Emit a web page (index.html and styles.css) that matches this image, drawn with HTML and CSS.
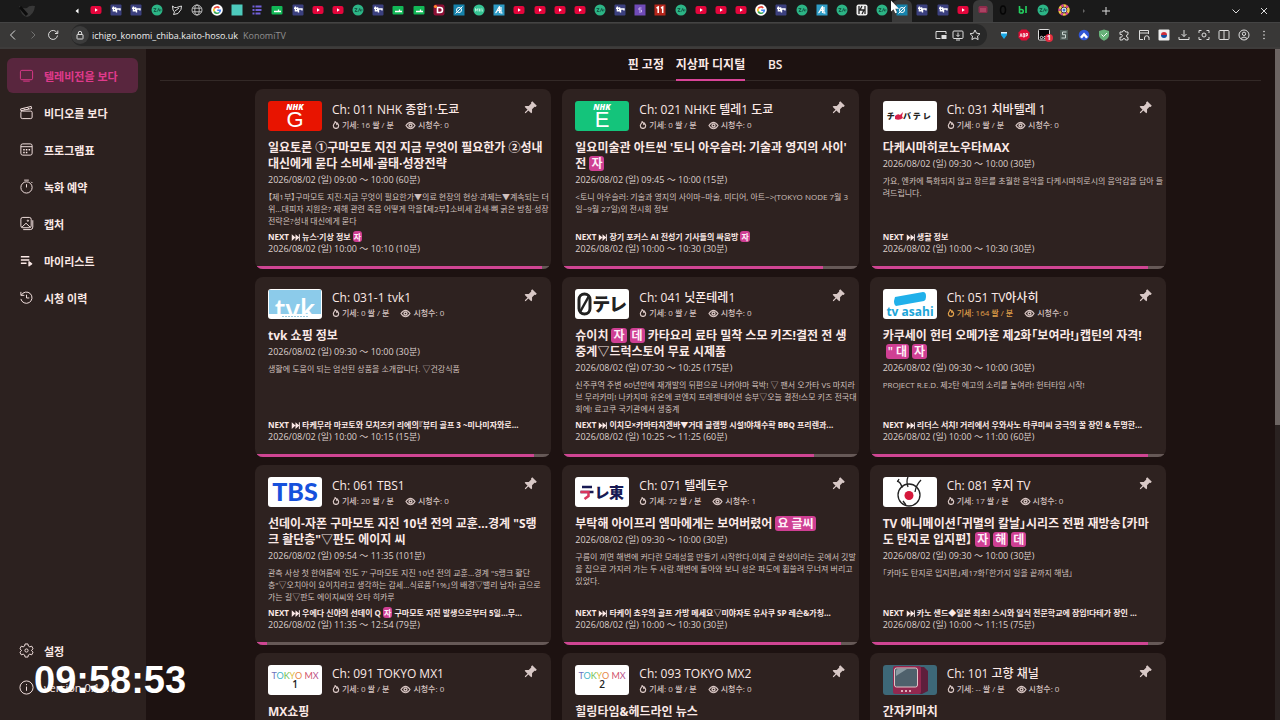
FILE: index.html
```html
<!DOCTYPE html>
<html lang="ko">
<head>
<meta charset="utf-8">
<title>KonomiTV</title>
<link rel="stylesheet" href="styles.css">
</head>
<body>
<svg class="defs" aria-hidden="true">
  <symbol id="yt" viewBox="0 0 12 12"><rect x="0.5" y="2" width="11" height="8" rx="2" fill="#e4063c"/><path d="M5 4.3v3.4L7.8 6z" fill="#fff"/></symbol>
  <symbol id="nv" viewBox="0 0 12 12"><rect x="0.5" y="0.5" width="11" height="11" rx="1" fill="#3b407f"/><path d="M2 4.2h4M3.4 2.5v4.3h2.2V3.2M6.5 8.5V5h3.5v1.5" stroke="#fff" stroke-width="1.4" fill="none"/></symbol>
  <symbol id="gr" viewBox="0 0 12 12"><circle cx="6" cy="6" r="5.5" fill="#2cb586"/><path d="M2.5 4.5h2.500l-2 3h2.500M6.500 7.500l1.200-3 1.200 3M9 6h1.500" stroke="#155c49" stroke-width="1" fill="none"/></symbol>
  <symbol id="gs" viewBox="0 0 12 12"><rect x="0.5" y="2" width="11" height="8.5" rx="1" fill="#12b857"/><path d="M3 7.5h7M7.5 5.5v2" stroke="#fff" stroke-width="1.3"/></symbol>
  <symbol id="bird" viewBox="0 0 12 12"><path d="M1.5 2l2 1.5h2L10.5 2 10 5.5 7 9.5l-4.500 1L3.500 8 2 6zM4 7l4-3" stroke="#ddd" fill="none"/></symbol>
  <symbol id="globe" viewBox="0 0 12 12"><g stroke="#ccc" fill="none" stroke-width="0.9"><circle cx="6" cy="6" r="5"/><ellipse cx="6" cy="6" rx="2.200" ry="5"/><path d="M1.500 4.200h9M1.500 7.800h9"/></g></symbol>
  <symbol id="gg" viewBox="0 0 12 12"><circle cx="6" cy="6" r="5.800" fill="#fff"/><g fill="none" stroke-width="1.600"><path d="M8.300 3.800A3.300 3.300 0 0 0 3.200 4.500" stroke="#ea4335"/><path d="M3.200 4.500a3.300 3.300 0 0 0 0 3" stroke="#fbbc05"/><path d="M3.200 7.500a3.300 3.300 0 0 0 5 1" stroke="#34a853"/><path d="M8.200 8.500A3.300 3.300 0 0 0 9.300 6.200H6.200" stroke="#4285f4"/></g></symbol>
  <symbol id="teal" viewBox="0 0 12 12"><rect x="0.500" y="0.500" width="11" height="11" fill="#4dcbbd"/></symbol>
  <symbol id="list" viewBox="0 0 12 12"><path d="M1.500 2.500h2m1 0h6M1.500 6h2m1 0h6M1.500 9.500h2m1 0h5" stroke="#7160d8" stroke-width="2"/></symbol>
  <symbol id="dd" viewBox="0 0 12 12"><rect x="0.500" y="0.500" width="11" height="11" rx="2" fill="#8d0f35"/><path d="M4.500 3.500h2.500a2.500 2.500 0 0 1 0 5H4.500z" fill="none" stroke="#fff" stroke-width="1.600"/><circle cx="2.500" cy="2.500" r="1.600" fill="#ff8b2a"/></symbol>
  <symbol id="pl" viewBox="0 0 12 12"><rect x="0.500" y="0.500" width="11" height="11" fill="#1683ac"/><ellipse cx="6" cy="6" rx="2.500" ry="2.500" fill="none" stroke="#fff"/><path d="M2.500 9.500L9.500 2.500" stroke="#fff"/></symbol>
  <symbol id="mk" viewBox="0 0 12 12"><circle cx="6" cy="6" r="5.600" fill="#35c393"/><path d="M2.500 7.500v-3l1.200 2 1.200-2v3M6.500 4.500v3m1.500-3L6.500 6 8 7.500M9 4.500v2.500h1" stroke="#d8fff0" stroke-width="0.700" fill="none"/></symbol>
  <symbol id="aa" viewBox="0 0 12 12"><rect x="0.500" y="0.500" width="11" height="11" fill="#2e9cc6"/><path d="M2.500 9C4 8 6 2.500 6.500 2.500V9M4 6.500h4M8 3v6h1.500" stroke="#fff" stroke-width="1.200" fill="none"/></symbol>
  <symbol id="ss" viewBox="0 0 12 12"><rect x="0.500" y="0.500" width="11" height="11" fill="#704bb8"/><path d="M7.500 4H5v2h2.500v2H5" stroke="#c9b5f0" fill="none"/></symbol>
  <symbol id="el" viewBox="0 0 12 12"><rect x="0.500" y="0.500" width="11" height="11" fill="#b5261b"/><path d="M2.500 4L4.200 3v6M7 4l1.700-1v6" stroke="#fff" stroke-width="1.500" fill="none"/></symbol>
  <symbol id="hh" viewBox="0 0 12 12"><rect x="0.500" y="0.500" width="11" height="11" rx="2" fill="#eee"/><path d="M3 2v8M6 2L4 6h4L6 10M9 2v8" stroke="#222" stroke-width="1.300" fill="none"/></symbol>
  <symbol id="tv" viewBox="0 0 12 12"><rect x="1.500" y="2" width="9" height="7" rx="1.500" fill="#8f2c4c"/><path d="M3 5h6M3 7h6" stroke="#d36687" stroke-width="0.800"/></symbol>
  <symbol id="dk" viewBox="0 0 12 12"><ellipse cx="6" cy="6" rx="2.500" ry="4" stroke="#050505" stroke-width="1.500" fill="none"/></symbol>
  <symbol id="bl" viewBox="0 0 12 12"><path d="M2.500 2v7M2.500 5.500h2A1.700 1.700 0 0 1 4.500 9H2.500M9 2v7" stroke="#23d160" stroke-width="1.600" fill="none"/></symbol>
  <symbol id="co" viewBox="0 0 12 12"><circle cx="6" cy="6" r="4.500" fill="none" stroke="#f4c542" stroke-width="2.500" stroke-dasharray="3 2"/><circle cx="6" cy="6" r="4.500" fill="none" stroke="#e0479b" stroke-width="2.500" stroke-dasharray="2 3" stroke-dashoffset="2"/><circle cx="6" cy="6" r="2.500" fill="#eee"/><circle cx="6" cy="6" r="1.500" fill="#3a79d8"/></symbol>

  <symbol id="pin" viewBox="0 0 24 24"><path fill="currentColor" transform="rotate(45 12 12)" d="M6.500 1h11v3l-1.500 1V11l4 4v2h-7v6L12 24.500 11 23v-6H4v-2l4-4V5L6.500 4z"/></symbol>
  <symbol id="fire" viewBox="0 0 12 12"><path d="M4.800 1C5 3 2 4.200 2 7.200a4 4 0 0 0 8 0C10 5.600 9 4.400 8.300 3.600 8.200 4.500 7.800 5 7.200 5.200 7.300 3.200 6.200 1.700 4.800 1z" fill="none" stroke="currentColor" stroke-width="1.800"/></symbol>
  <symbol id="eye" viewBox="0 0 14 12"><path d="M1 6c2-3.300 4-4.300 6-4.300S11 2.700 13 6c-2 3.300-4 4.300-6 4.300S3 9.300 1 6z" fill="none" stroke="currentColor" stroke-width="1.600"/><circle cx="7" cy="6" r="2" fill="none" stroke="currentColor" stroke-width="1.800"/></symbol>
  <symbol id="ff" viewBox="0 0 12 12"><path d="M1 1.500L6 6l-5 4.500zM6 1.500L11 6l-5 4.500zM10.500 1.500h1.300v9h-1.300z" fill="currentColor"/></symbol>
</svg>

<header class="browser">
  <div class="tabstrip">
    <div class="strip-start"><svg class="swallow" viewBox="0 0 20 16"><path d="M2 3q4 3 8 2 2-3 8-2-1 9-8 11Q4 13 2 3z" fill="#383838"/><path d="M3 4l7 8" stroke="#0c0c0c" stroke-width="3"/></svg><svg class="fav" viewBox="0 0 12 12"><path d="M7.500 3.500v5L4.500 6z" fill="#fff"/></svg></div>
    <nav class="tablist" aria-label="탭">
      <button><svg class="fav"><use href="#yt"/></svg></button><button><svg class="fav"><use href="#nv"/></svg></button><button><svg class="fav"><use href="#nv"/></svg></button><button><svg class="fav"><use href="#gr"/></svg></button><button><svg class="fav"><use href="#bird"/></svg></button><button><svg class="fav"><use href="#globe"/></svg></button><button><svg class="fav"><use href="#gg"/></svg></button><button><svg class="fav"><use href="#teal"/></svg></button><button><svg class="fav"><use href="#list"/></svg></button><button><svg class="fav"><use href="#gs"/></svg></button>
      <button><svg class="fav"><use href="#nv"/></svg></button><button><svg class="fav"><use href="#yt"/></svg></button><button><svg class="fav"><use href="#yt"/></svg></button><button><svg class="fav"><use href="#gr"/></svg></button><button><svg class="fav"><use href="#nv"/></svg></button><button><svg class="fav"><use href="#gs"/></svg></button><button><svg class="fav"><use href="#gs"/></svg></button><button><svg class="fav"><use href="#dd"/></svg></button><button><svg class="fav"><use href="#pl"/></svg></button><button><svg class="fav"><use href="#mk"/></svg></button>
      <button><svg class="fav"><use href="#aa"/></svg></button><button><svg class="fav"><use href="#yt"/></svg></button><button><svg class="fav"><use href="#yt"/></svg></button><button><svg class="fav"><use href="#yt"/></svg></button><button><svg class="fav"><use href="#yt"/></svg></button><button><svg class="fav"><use href="#gr"/></svg></button><button><svg class="fav"><use href="#nv"/></svg></button><button><svg class="fav"><use href="#ss"/></svg></button><button><svg class="fav"><use href="#el"/></svg></button><button><svg class="fav"><use href="#gr"/></svg></button>
      <button><svg class="fav"><use href="#yt"/></svg></button><button><svg class="fav"><use href="#yt"/></svg></button><button><svg class="fav"><use href="#yt"/></svg></button><button><svg class="fav"><use href="#gg"/></svg></button><button><svg class="fav"><use href="#nv"/></svg></button><button><svg class="fav"><use href="#gr"/></svg></button><button><svg class="fav"><use href="#aa"/></svg></button><button><svg class="fav"><use href="#gr"/></svg></button><button><svg class="fav"><use href="#hh"/></svg></button><button><svg class="fav"><use href="#gr"/></svg></button>
      <button class="on"><svg class="fav"><use href="#pl"/></svg></button><button><svg class="fav"><use href="#nv"/></svg></button><button><svg class="fav"><use href="#nv"/></svg></button><button><svg class="fav"><use href="#yt"/></svg></button><button class="on"><svg class="fav"><use href="#tv"/></svg></button><button><svg class="fav"><use href="#dk"/></svg></button><button><svg class="fav"><use href="#bl"/></svg></button><button><svg class="fav"><use href="#gr"/></svg></button><button><svg class="fav"><use href="#co"/></svg></button>
    </nav>
    <div class="strip-end">
      <svg class="fav" viewBox="0 0 12 12"><path d="M5 4v4l2-2z" fill="#666"/></svg>
      <button class="new" aria-label="새 탭"><svg class="fav line" viewBox="0 0 12 12"><path d="M6 2v8M2 6h8"/></svg></button>
      <button aria-label="탭 검색"><svg class="fav line" viewBox="0 0 12 12"><path d="M2.500 4.500L6 8l3.500-3.500"/></svg></button>
      <button aria-label="닫기"><svg class="fav line" viewBox="0 0 12 12"><path d="M3 3l6 6M9 3L3 9"/></svg></button>
    </div>
  </div>
  <div class="toolbar">
    <button aria-label="뒤로"><svg class="fav line" viewBox="0 0 12 12"><path d="M8 1.500L3.500 6 8 10.500"/></svg></button>
    <button aria-label="앞으로" class="dim"><svg class="fav line" viewBox="0 0 12 12"><path d="M4.500 2.500L8 6l-3.500 3.500"/></svg></button>
    <button aria-label="새로고침"><svg class="fav line" viewBox="0 0 12 12"><path d="M10 3.800A4.500 4.500 0 1 0 10.500 6.500M10.800 1.500v3H8"/></svg></button>
    <div class="omnibox">
      <span class="lock"><svg class="fav line" viewBox="0 0 12 12"><rect x="3" y="5.500" width="6" height="4.500" rx="0.500"/><path d="M4.300 5.500V4a1.700 1.700 0 0 1 3.400 0v1.500"/></svg></span>
      <span class="url">ichigo_konomi_chiba.kaito-hoso.uk</span><span class="site">KonomiTV</span>
      <span class="omni-icons">
        <svg class="fav line" viewBox="0 0 12 12"><path d="M11 5V2.500H1v7h4.500"/><rect x="7" y="6.500" width="4" height="3" fill="#ddd"/></svg>
        <svg class="fav line" viewBox="0 0 12 12"><rect x="1" y="2" width="10" height="7.500" rx="1"/><path d="M6 3.500v4M4.300 5.800L6 7.500l1.700-1.700M4 11h4"/></svg>
        <svg class="fav line" viewBox="0 0 12 12"><path d="M6 1l1.500 3.200 3.500.5-2.500 2.400.6 3.500L6 8.900l-3.100 1.700.6-3.500L1 4.700l3.500-.5z"/></svg>
      </span>
    </div>
    <div class="extensions">
      <svg class="fav" viewBox="0 0 12 12"><path d="M3 3h6v3L6 10 3 6z" fill="#19a8e6"/><path d="M3 3h6v1.500H3z" fill="#e6f6ff"/></svg>
      <svg class="fav" viewBox="0 0 12 12"><path d="M3.500 0.500h5l3 3v5l-3 3h-5l-3-3v-5z" fill="#dd0d35"/><path d="M2 8l1-3.500L4 8M5.200 4.500V8H6.500V4.500zM8 8V4.500h1.500v2H8" stroke="#fff" stroke-width="0.800" fill="none"/></svg>
      <span class="ext-badge"><svg class="fav" viewBox="0 0 12 12"><rect x="0.500" y="0.500" width="11" height="10.500" rx="1" fill="#050505" stroke="#ddd"/><circle cx="3.500" cy="8.500" r="1.200" fill="none" stroke="#ddd"/><circle cx="7" cy="8.500" r="1.200" fill="none" stroke="#ddd"/></svg><b>1</b></span>
      <svg class="fav" viewBox="0 0 12 12"><rect x="2" y="1" width="8" height="10" fill="#4c5955"/><path d="M8.500 3h-4v2.700h3V9H3.500" fill="none" stroke="#ccd8d4"/></svg>
      <svg class="fav" viewBox="0 0 12 12"><circle cx="6" cy="6" r="5.300" fill="#3157d7"/><path d="M2 8l4-4.500L10 8 8 9.500 6 7 4 9.500z" fill="#fff"/></svg>
      <svg class="fav" viewBox="0 0 12 12"><path d="M6 0.500l5 1.500v4c0 3-2.500 4.500-5 5.700C3.500 10.500 1 9 1 6V2z" fill="#67b279"/><path d="M3.500 5.500l2 2 3.500-3.500" stroke="#fff" fill="none"/></svg>
      <svg class="fav line" viewBox="0 0 12 12"><path d="M2 3h2.500a1.500 1.500 0 0 1 3 0H10v2.500a1.500 1.500 0 1 0 0 3V11H7.500a1.500 1.500 0 0 0-3 0H2V8a1.500 1.500 0 1 0 0-2.500z"/></svg>
      <svg class="fav line" viewBox="0 0 12 12"><path d="M5 10.500H1.500v-9h9V5M1.500 4h9M6.500 9a2.200 2.200 0 0 1 4.500 0M6.500 8.500v2.500M11 8.500v2.500"/></svg>
      <svg class="fav" viewBox="0 0 12 12"><rect x="0.500" y="0.500" width="11" height="11" rx="1" fill="#eee"/><path d="M3 6a3 3 0 0 1 6 0z" fill="#cd2e3a"/><path d="M3 6a3 3 0 0 0 6 0z" fill="#1450a0"/></svg>
      <svg class="fav line" viewBox="0 0 12 12"><path d="M6 1v6.500M3.500 5L6 7.500 8.500 5M1 8v2.500h10V8"/></svg>
      <svg class="fav line" viewBox="0 0 12 12"><path d="M1 4V1.500h2.500M8.500 1.500H11V4M11 8v2.500H8.500M3.500 10.500H1V8"/><circle cx="6" cy="6" r="2"/></svg>
      <svg class="fav line" viewBox="0 0 12 12"><rect x="1" y="1.500" width="10" height="9" rx="1"/><path d="M6 1.500v9"/></svg>
      <svg class="fav line" viewBox="0 0 12 12"><circle cx="6" cy="6" r="5"/><circle cx="6" cy="4.800" r="1.700"/><path d="M2.800 9.500q3.200-3 6.400 0"/></svg>
      <svg class="fav" viewBox="0 0 12 12"><g fill="#ddd"><circle cx="6" cy="2.500" r="0.800"/><circle cx="6" cy="6" r="0.800"/><circle cx="6" cy="9.500" r="0.800"/></g></svg>
    </div>
  </div>
  <svg class="cursor" viewBox="0 0 10 14"><path d="M1 0.500v11l2.500-2.200 1.800 4 1.700-.8-1.700-3.800H9z" fill="#fff"/></svg>
</header>

<div class="app">
  <aside class="sidebar">
    <a class="nav active" href="#"><svg viewBox="0 0 16 16"><rect x="1.500" y="2.500" width="13" height="10" rx="1.500"/><path d="M4.500 14h7"/></svg>텔레비전을 보다</a>
    <a class="nav" href="#"><svg viewBox="0 0 16 16"><rect x="2" y="6.500" width="12" height="8" rx="1.500"/><path d="M2 6L1.700 4.200 13 1.500l.5 2.300zM5 3.500l1.500 1.700M9 2.500L10.500 4.300"/></svg>비디오를 보다</a>
    <a class="nav" href="#"><svg viewBox="0 0 16 16"><rect x="2" y="2" width="12" height="12" rx="2"/><path d="M2 5h12"/><path d="M4.500 11.200h1.600M7.300 11.200h1.600M7.300 8.200h1.600M10.200 8.200h1.600M4.500 8.200h1.600" stroke-width="1.700"/></svg>프로그램표</a>
    <a class="nav" href="#"><svg viewBox="0 0 16 16"><circle cx="8" cy="9" r="6"/><path d="M5.500 1.200h5M8 5.500V9M13 3l1.300 1.300"/></svg>녹화 예약</a>
    <a class="nav" href="#"><svg viewBox="0 0 16 16"><rect x="2" y="1.500" width="11" height="11" rx="2"/><path d="M4.500 14.500H12q2.700 0 2.700-2.700V4.500M3 12l4.500-4.300L12 12"/><circle cx="9.500" cy="5" r="0.700"/></svg>캡처</a>
    <a class="nav" href="#"><svg viewBox="0 0 16 16"><path d="M2 4h9M2 7.500h9M2 11h6" stroke-width="1.500"/><path d="M10.500 9v5l3.500-2.500z" fill="currentColor"/></svg>마이리스트</a>
    <a class="nav" href="#"><svg viewBox="0 0 16 16"><path d="M2.500 5.500A6 6 0 1 1 2 9.500M2 2v3.700h3.700M8 5v3.500h3"/></svg>시청 이력</a>
    <span class="spacer"></span>
    <a class="nav" href="#"><svg viewBox="0 0 16 16"><path d="M6.500 1h3l.5 2.200 1.500.9 2.100-.7L15 6.200l-1.600 1.500v.6L15 9.800l-1.400 2.800-2.100-.7-1.500.9-.5 2.200h-3L6 12.800l-1.500-.9-2.100.7L1 9.800l1.600-1.500v-.6L1 6.200l1.400-2.800 2.100.7L6 3.200z"/><circle cx="8" cy="8" r="1.700"/></svg>설정</a>
    <a class="nav version" href="#"><svg viewBox="0 0 16 16"><circle cx="8" cy="8" r="7"/><path d="M8 7v4.500M8 4.300v1.200"/></svg>version 0.14.1</a>
  </aside>

  <main class="content">
    <nav class="channels-tab">
      <button>핀 고정</button>
      <button class="current">지상파 디지털</button>
      <button>BS</button>
    </nav>
    <div class="grid">
      <article class="card">
        <div class="head"><svg class="logo" viewBox="0 0 54 30"><rect width="54" height="30" fill="#e81400"/><text x="27" y="9" class="nhk">NHK</text><text x="27" y="26" class="big">G</text></svg>
          <div class="info"><h2>Ch: 011 NHK 종합1·도쿄</h2><p class="stat"><span><svg><use href="#fire"/></svg>기세: 16 쌀 / 분</span><span><svg class="e"><use href="#eye"/></svg>시청수: 0</span></p></div>
          <button class="pin" aria-label="핀"><svg><use href="#pin"/></svg></button></div>
        <h3>일요토론 ①구마모토 지진 지금 무엇이 필요한가 ②성내<br>대신에게 묻다 소비세·골태·성장전략</h3>
        <p class="time">2026/08/02 (일) 09:00 〜 10:00 (60분)</p>
        <p class="desc">【제1부】구마모토 지진·지금 무엇이 필요한가▼의료 현장의 현상·과제는▼계속되는 더<br>위…대피자 지원은? 재해 관련 죽음 어떻게 막을【제2부】소비세 감세·뼈 굵은 방침·성장<br>전략은?성내 대신에게 묻다</p>
        <p class="next">NEXT <svg><use href="#ff"/></svg> 뉴스·기상 정보<mark>자</mark></p>
        <p class="next-time">2026/08/02 (일) 10:00 〜 10:10 (10분)</p>
        <div class="bar"><i style="width:97%"></i></div>
      </article>

      <article class="card">
        <div class="head"><svg class="logo" viewBox="0 0 54 30"><rect width="54" height="30" fill="#14c47b"/><text x="27" y="9" class="nhk">NHK</text><text x="27" y="26" class="big">E</text></svg>
          <div class="info"><h2>Ch: 021 NHKE 텔레1 도쿄</h2><p class="stat"><span><svg><use href="#fire"/></svg>기세: 0 쌀 / 분</span><span><svg class="e"><use href="#eye"/></svg>시청수: 0</span></p></div>
          <button class="pin" aria-label="핀"><svg><use href="#pin"/></svg></button></div>
        <h3>일요미술관 아트씬 '토니 아우슬러: 기술과 영지의 사이'<br>전<mark>자</mark></h3>
        <p class="time">2026/08/02 (일) 09:45 〜 10:00 (15분)</p>
        <p class="desc">&lt;토니 아우슬러: 기술과 영지의 사이마~마술, 미디어, 아트~&gt;(TOKYO NODE 7월 3<br>일~9월 27일)외 전시회 정보</p>
        <p class="next">NEXT <svg><use href="#ff"/></svg> 장기 포커스 AI 전성기 기사들의 싸움방<mark>자</mark></p>
        <p class="next-time">2026/08/02 (일) 10:00 〜 10:30 (30분)</p>
        <div class="bar"><i style="width:88%"></i></div>
      </article>

      <article class="card">
        <div class="head"><svg class="logo" viewBox="0 0 54 30"><rect width="54" height="30" fill="#fff"/><g class="jp" font-size="8" fill="#222"><text x="4" y="18">チ</text><text x="20" y="18">バ</text><text x="30" y="18">テ</text><text x="40" y="18">レ</text></g><path d="M12 15q3-3 5-1l3-3-1 4 1 2q-4 3-8 1z" fill="#d4204c"/></svg>
          <div class="info"><h2>Ch: 031 치바텔레 1</h2><p class="stat"><span><svg><use href="#fire"/></svg>기세: 0 쌀 / 분</span><span><svg class="e"><use href="#eye"/></svg>시청수: 0</span></p></div>
          <button class="pin" aria-label="핀"><svg><use href="#pin"/></svg></button></div>
        <h3>다케시마히로노우타MAX</h3>
        <p class="time">2026/08/02 (일) 09:30 〜 10:00 (30분)</p>
        <p class="desc">가요, 엔카에 특화되지 않고 장르를 초월한 음악을 다케시마히로시의 음악감을 담아 들<br>려드립니다.</p>
        <p class="next">NEXT <svg><use href="#ff"/></svg> 생활 정보</p>
        <p class="next-time">2026/08/02 (일) 10:00 〜 10:30 (30분)</p>
        <div class="bar"><i style="width:94%"></i></div>
      </article>

      <article class="card">
        <div class="head"><svg class="logo" viewBox="0 0 54 30"><rect width="54" height="30" fill="#fff"/><rect x="1" y="1" width="52" height="24" fill="#8ccbea"/><text x="27" y="30" class="tvk">tvk</text><rect x="1" y="25" width="52" height="4" fill="#fff"/><path d="M14 27.500h27" stroke="#9dc8dc" stroke-dasharray="2 1"/></svg>
          <div class="info"><h2>Ch: 031-1 tvk1</h2><p class="stat"><span><svg><use href="#fire"/></svg>기세: 0 쌀 / 분</span><span><svg class="e"><use href="#eye"/></svg>시청수: 0</span></p></div>
          <button class="pin" aria-label="핀"><svg><use href="#pin"/></svg></button></div>
        <h3>tvk 쇼핑 정보</h3>
        <p class="time">2026/08/02 (일) 09:30 〜 10:00 (30분)</p>
        <p class="desc">생활에 도움이 되는 엄선된 상품을 소개합니다. ▽건강식품</p>
        <p class="next">NEXT <svg><use href="#ff"/></svg> 타케무라 마코토와 모치즈키 리에의『뷰티 골프 3 ~미나미자와로...</p>
        <p class="next-time">2026/08/02 (일) 10:00 〜 10:15 (15분)</p>
        <div class="bar"><i style="width:94%"></i></div>
      </article>

      <article class="card">
        <div class="head"><svg class="logo" viewBox="0 0 54 30"><rect width="54" height="30" fill="#fff"/><rect x="4" y="5" width="11" height="20" rx="5.500" fill="none" stroke="#222" stroke-width="3"/><path d="M5 23L14 7" stroke="#222" stroke-width="2.500"/><text x="18" y="22" class="jp" font-size="18" fill="#222">テレ</text></svg>
          <div class="info"><h2>Ch: 041 닛폰테레1</h2><p class="stat"><span><svg><use href="#fire"/></svg>기세: 0 쌀 / 분</span><span><svg class="e"><use href="#eye"/></svg>시청수: 0</span></p></div>
          <button class="pin" aria-label="핀"><svg><use href="#pin"/></svg></button></div>
        <h3>슈이치<mark>자</mark><mark>데</mark> 카타요리 료타 밀착 스모 키즈!결전 전 생<br>중계▽드럭스토어 무료 시제품</h3>
        <p class="time">2026/08/02 (일) 07:30 〜 10:25 (175분)</p>
        <p class="desc">신주쿠역 주변 60년만에 재개발의 뒤편으로 나카야마 육박! ▽ 팬서 오가타 VS 마지라<br>브 무라카미! 나카지마 유온에 코엔지 프레젠테이션 승부▽오늘 결전!스모 키즈 전국대<br>회에! 료고쿠 국기관에서 생중계</p>
        <p class="next">NEXT <svg><use href="#ff"/></svg> 이치모×카마타치겐바▼거대 글램핑 시설!야채수확 BBQ 프리렌과...</p>
        <p class="next-time">2026/08/02 (일) 10:25 〜 11:25 (60분)</p>
        <div class="bar"><i style="width:85%"></i></div>
      </article>

      <article class="card">
        <div class="head"><svg class="logo" viewBox="0 0 54 30"><rect width="54" height="30" fill="#fff"/><path d="M12 8l28-5q3 0 3 4t-2 5l-28 5q-2-1-2-5z" fill="#20b0ea"/><text x="27" y="27" text-anchor="middle" font-size="12" font-weight="700" fill="#20a5d8">tv asahi</text></svg>
          <div class="info"><h2>Ch: 051 TV아사히</h2><p class="stat"><span class="hot"><svg><use href="#fire"/></svg>기세: 164 쌀 / 분</span><span><svg class="e"><use href="#eye"/></svg>시청수: 0</span></p></div>
          <button class="pin" aria-label="핀"><svg><use href="#pin"/></svg></button></div>
        <h3>카쿠세이 헌터 오메가혼 제2화「보여라!」캡틴의 자격!<br><mark>" 대</mark><mark>자</mark></h3>
        <p class="time">2026/08/02 (일) 09:30 〜 10:00 (30분)</p>
        <p class="desc">PROJECT R.E.D. 제2탄 에고의 소리를 높여라! 헌터타임 시작!</p>
        <p class="next">NEXT <svg><use href="#ff"/></svg> 리더스 서치! 거리에서 우와사노 타쿠미씨 궁극의 꿀 장인 &amp; 투명한...</p>
        <p class="next-time">2026/08/02 (일) 10:00 〜 11:00 (60분)</p>
        <div class="bar"><i style="width:94%"></i></div>
      </article>

      <article class="card">
        <div class="head"><svg class="logo" viewBox="0 0 54 30"><rect width="54" height="30" fill="#fff"/><text x="27" y="24" text-anchor="middle" class="tbs">TBS</text></svg>
          <div class="info"><h2>Ch: 061 TBS1</h2><p class="stat"><span><svg><use href="#fire"/></svg>기세: 20 쌀 / 분</span><span><svg class="e"><use href="#eye"/></svg>시청수: 0</span></p></div>
          <button class="pin" aria-label="핀"><svg><use href="#pin"/></svg></button></div>
        <h3>선데이-자폰 구마모토 지진 10년 전의 교훈…경계 "S랭<br>크 활단층"▽판도 에이지 씨</h3>
        <p class="time">2026/08/02 (일) 09:54 〜 11:35 (101분)</p>
        <p class="desc">관측 사상 첫 한여름에 '진도 7' 구마모토 지진 10년 전의 교훈…경계 "S랭크 활단<br>층"▽오치아이 요이치라고 생각하는 감세…식료품「1%」의 배경▽밸리 남자! 금으로<br>가는 길▽판도 에이지씨와 오타 히카루</p>
        <p class="next">NEXT <svg><use href="#ff"/></svg> 우에다 신야의 선데이 Q<mark>자</mark> 구마모토 지진 발생으로부터 5일…무...</p>
        <p class="next-time">2026/08/02 (일) 11:35 〜 12:54 (79분)</p>
        <div class="bar"><i style="width:4%"></i></div>
      </article>

      <article class="card">
        <div class="head"><svg class="logo" viewBox="0 0 54 30"><rect width="54" height="30" fill="#fff"/><path d="M7 10h10M5.500 15h13" stroke="#171a54" stroke-width="2.500"/><path d="M5.500 15h8v4l-4 3" fill="none" stroke="#d9365e" stroke-width="2.500"/><text x="20" y="21" class="jp" font-size="15" fill="#171a54">レ東</text></svg>
          <div class="info"><h2>Ch: 071 텔레토우</h2><p class="stat"><span><svg><use href="#fire"/></svg>기세: 72 쌀 / 분</span><span><svg class="e"><use href="#eye"/></svg>시청수: 1</span></p></div>
          <button class="pin" aria-label="핀"><svg><use href="#pin"/></svg></button></div>
        <h3>부탁해 아이프리 엠마에게는 보여버렸어<mark>요 글씨</mark></h3>
        <p class="time">2026/08/02 (일) 09:30 〜 10:00 (30분)</p>
        <p class="desc">구름이 끼면 해변에 커다란 모래성을 만들기 시작한다.이제 곧 완성이라는 곳에서 깃발<br>을 집으로 가지러 가는 두 사람.해변에 돌아와 보니 성은 파도에 휩쓸려 무너져 버리고<br>있었다.</p>
        <p class="next">NEXT <svg><use href="#ff"/></svg> 타케이 쵸우의 골프 가방 메세요▽미야자토 유사쿠 SP 레슨&amp;가칭...</p>
        <p class="next-time">2026/08/02 (일) 10:00 〜 10:30 (30분)</p>
        <div class="bar"><i style="width:94%"></i></div>
      </article>

      <article class="card">
        <div class="head"><svg class="logo" viewBox="0 0 54 30"><rect width="54" height="30" fill="#fff"/><g fill="none" stroke="#222" stroke-width="1.300"><circle cx="26" cy="18" r="11"/><path d="M14 4q4 1 5 7M25 0q-2 4 0 10M38 3q-5 5-6 12M15 4l1-2M20 24l3 4"/></g><circle cx="26" cy="18.500" r="4.500" fill="#d5173b"/></svg>
          <div class="info"><h2>Ch: 081 후지 TV</h2><p class="stat"><span><svg><use href="#fire"/></svg>기세: 17 쌀 / 분</span><span><svg class="e"><use href="#eye"/></svg>시청수: 0</span></p></div>
          <button class="pin" aria-label="핀"><svg><use href="#pin"/></svg></button></div>
        <h3>TV 애니메이션「귀멸의 칼날」시리즈 전편 재방송【카마<br>도 탄지로 입지편】<mark>자</mark><mark>해</mark><mark>데</mark></h3>
        <p class="time">2026/08/02 (일) 09:30 〜 10:00 (30분)</p>
        <p class="desc">「카마도 탄지로 입지편」제17화「한가지 일을 끝까지 해냄」</p>
        <p class="next">NEXT <svg><use href="#ff"/></svg> 카노 샌드◆일본 최초! 스시와 일식 전문학교에 잠입!다테가 장인 ...</p>
        <p class="next-time">2026/08/02 (일) 10:00 〜 11:15 (75분)</p>
        <div class="bar"><i style="width:94%"></i></div>
      </article>

      <article class="card">
        <div class="head"><svg class="logo" viewBox="0 0 54 30"><rect width="54" height="30" fill="#fff"/><text x="27" y="14" class="mx"><tspan fill="#6b72bd">T</tspan><tspan fill="#45b5c9">O</tspan><tspan fill="#71bf55">K</tspan><tspan fill="#dfbd3c">Y</tspan><tspan fill="#e8874a">O</tspan><tspan fill="#d1506b"> M</tspan><tspan fill="#b8528b">X</tspan></text><text x="27" y="23" class="num">1</text></svg>
          <div class="info"><h2>Ch: 091 TOKYO MX1</h2><p class="stat"><span><svg><use href="#fire"/></svg>기세: 0 쌀 / 분</span><span><svg class="e"><use href="#eye"/></svg>시청수: 0</span></p></div>
          <button class="pin" aria-label="핀"><svg><use href="#pin"/></svg></button></div>
        <h3>MX쇼핑</h3>
      </article>

      <article class="card">
        <div class="head"><svg class="logo" viewBox="0 0 54 30"><rect width="54" height="30" fill="#fff"/><text x="27" y="14" class="mx"><tspan fill="#6b72bd">T</tspan><tspan fill="#45b5c9">O</tspan><tspan fill="#71bf55">K</tspan><tspan fill="#dfbd3c">Y</tspan><tspan fill="#e8874a">O</tspan><tspan fill="#d1506b"> M</tspan><tspan fill="#b8528b">X</tspan></text><text x="27" y="23" class="num">2</text></svg>
          <div class="info"><h2>Ch: 093 TOKYO MX2</h2><p class="stat"><span><svg><use href="#fire"/></svg>기세: 0 쌀 / 분</span><span><svg class="e"><use href="#eye"/></svg>시청수: 0</span></p></div>
          <button class="pin" aria-label="핀"><svg><use href="#pin"/></svg></button></div>
        <h3>힐링타임&amp;헤드라인 뉴스</h3>
      </article>

      <article class="card">
        <div class="head"><svg class="logo" viewBox="0 0 54 30"><rect width="54" height="30" fill="#3d6878"/><path d="M34 2h7l4 4v20l-6 3h-6z" fill="#5e1f3c"/><rect x="10" y="1" width="28" height="28" rx="2" fill="#92284f"/><rect x="11.500" y="3" width="23" height="19" rx="2" fill="#4f616c" stroke="#e4c5c9"/><path d="M13 11v-5q0-2 2-2h9z" fill="#8b9ba3"/><path d="M18 26h2m2 0h2m2 0h2" stroke="#f5dce0" stroke-width="1.500"/></svg>
          <div class="info"><h2>Ch: 101 고향 채널</h2><p class="stat"><span><svg><use href="#fire"/></svg>기세: -- 쌀 / 분</span><span><svg class="e"><use href="#eye"/></svg>시청수: 0</span></p></div>
          <button class="pin" aria-label="핀"><svg><use href="#pin"/></svg></button></div>
        <h3>간자키마치</h3>
      </article>
    </div>
  </main>
  <div class="scroll"><i></i></div>
</div>
<time class="clock">09:58:53</time>
</body>
</html>
```
FILE: styles.css
```css
* { box-sizing: border-box; }
body {
  margin: 0;
  height: 100vh;
  display: flex;
  flex-direction: column;
  overflow: hidden;
  background: #1d1211;
  color: #fbe9e6;
  font-family: "Open Sans", "Noto Sans CJK KR", "Noto Sans CJK JP", sans-serif;
}
h2, h3, p { margin: 0; }
button {
  margin: 0;
  padding: 0;
  border: 0;
  background: none;
  color: inherit;
  font: inherit;
}
a { color: inherit; text-decoration: none; }
svg { display: block; flex: none; }
.defs { position: absolute; width: 0; height: 0; }

/* Browser chrome */
.browser { position: relative; flex: none; background: #1a1a1a; }
.tabstrip { display: flex; height: 22px; }
.strip-start { width: 86px; display: flex; align-items: center; justify-content: space-between; padding: 0 3px 0 17px; }
.swallow { width: 20px; height: 16px; }
.tablist { flex: 1; display: flex; min-width: 0; }
.tablist button { flex: 1; min-width: 0; display: flex; align-items: center; justify-content: center; padding-bottom: 2px; border-radius: 6px 6px 0 0; }
.tablist .on { background: #3a3a3a; }
.fav { width: 12px; height: 12px; }
.line { fill: none; stroke: #ddd; stroke-width: 1; }
.strip-end { width: 206px; display: flex; align-items: center; padding: 0 10px 0 4px; gap: 16px; }
.strip-end .new { margin: 0 auto 0 -6px; }
.toolbar {
  display: flex;
  align-items: center;
  height: 27px;
  padding: 0 10px 0 7px;
  gap: 8px;
  background: #393837;
  border-top: 1px solid #444;
  border-bottom: 2px solid #3e3c3b;
}
.dim { opacity: 0.35; }
.omnibox { flex: 1; display: flex; align-items: center; height: 22px; border-radius: 11px; background: #282828; margin-left: 4px; }
.lock { display: flex; align-items: center; justify-content: center; width: 18px; height: 18px; border-radius: 9px; background: #3b3b3b; }
.url { font-size: 9px; margin-left: 3px; color: #eee; }
.site { font-size: 9px; margin-left: 5px; color: #909090; }
.omni-icons { display: flex; gap: 5px; margin-left: auto; padding-right: 6px; }
.extensions { display: flex; gap: 8px; margin-left: 3px; }
.ext-badge { position: relative; }
.ext-badge b { position: absolute; left: 7px; top: 5px; width: 8px; height: 8px; border-radius: 4px; background: #e22c40; color: #fff; font-size: 7px; line-height: 8px; text-align: center; }
.cursor { position: absolute; left: 890px; top: 0; width: 10px; height: 14px; }

/* App shell */
.app { flex: 1; display: flex; min-height: 0; }
.sidebar { width: 146px; flex: none; display: flex; flex-direction: column; gap: 2px; padding: 9px 8px 15px 7px; background: #2c211f; }
.nav { display: flex; align-items: center; gap: 10px; height: 35px; padding-left: 12px; border-radius: 6px; font-size: 11px; font-weight: 600; }
.nav svg { width: 15px; height: 15px; fill: none; stroke: currentColor; stroke-width: 1; }
.active { background: #59263e; color: #e03a8c; }
.spacer { flex: 1; }
.version { font-weight: 400; }
.content { flex: 1; min-width: 0; overflow: hidden; padding: 0 14px; }
.channels-tab { display: flex; justify-content: center; height: 32px; border-bottom: 1px solid #332927; }
.channels-tab button { height: 32px; min-width: 60px; padding: 0 6px; font-size: 12px; font-weight: 600; line-height: 29px; border-bottom: 2px solid transparent; }
.channels-tab .current { border-color: #d94598; padding: 0; }
.grid { display: grid; grid-template-columns: repeat(3, minmax(0, 1fr)); grid-auto-rows: minmax(180px, auto); gap: 8px 11px; max-width: 911px; margin: 8px auto 0; }
.scroll { width: 5px; flex: none; background: #2a2221; }
.scroll i { display: block; height: 56%; background: #6c6462; }

/* Channel card */
.card { position: relative; display: flex; flex-direction: column; overflow: hidden; padding: 12px 14px 14px 13px; border-radius: 8px; background: #2e2220; white-space: nowrap; font-feature-settings: "palt"; }
.head { display: flex; gap: 10px; height: 30px; margin-bottom: 9px; }
.logo { width: 54px; height: 30px; border-radius: 3px; }
.info { flex: 1; min-width: 0; }
h2 { font-size: 12px; line-height: 18px; font-weight: 500; }
.stat { display: flex; gap: 11px; font-size: 8px; line-height: 12px; font-weight: 500; color: #d8c6c3; }
.stat span { display: flex; align-items: center; gap: 2px; }
.stat svg { width: 8px; height: 8px; }
.stat .e { width: 11px; height: 9px; }
.hot { color: #e0a04a; }
.pin { align-self: flex-start; color: #d8c8c6; }
.pin svg { width: 14px; height: 14px; }
h3 { font-size: 12px; line-height: 16px; font-weight: 700; }
mark { display: inline-block; margin-left: 3px; padding: 0 2px; border-radius: 3px; background: #cf3f93; color: #fff0f8; line-height: 15px; font-weight: 600; }
.time { margin-top: 1px; font-size: 9px; line-height: 14px; color: #ddd0cd; }
.desc { margin-top: 4px; font-size: 8px; line-height: 12px; color: #cfc0bd; }
.next { margin-top: auto; height: 12px; font-size: 8px; line-height: 12px; font-weight: 700; }
.next svg { display: inline-block; width: 9px; height: 9px; vertical-align: -2px; }
.next mark { margin-left: 2px; line-height: 11px; padding: 0 1px; }
.next-time { font-size: 9px; line-height: 12px; color: #ddd0cd; }
.bar { position: absolute; left: 0; right: 0; bottom: 0; height: 3px; background: #665957; }
.bar i { display: block; height: 3px; background: #cf4593; }

/* Lettering inside logos */
.nhk { font-size: 8px; font-weight: 800; font-style: italic; fill: #fff; text-anchor: middle; }
.big { font-family: "Liberation Sans", sans-serif; font-size: 22px; fill: #fff; text-anchor: middle; }
.jp { font-family: "Noto Sans CJK JP", sans-serif; font-weight: 900; }
.tvk { font-size: 27px; font-weight: 600; fill: #fff; text-anchor: middle; }
.tbs { font-family: Lato, sans-serif; font-size: 25px; font-weight: 900; fill: #1651dc; }
.mx { font-family: Lato, sans-serif; font-size: 9px; text-anchor: middle; }
.num { font-family: "Open Sans", sans-serif; font-size: 10px; font-weight: 600; fill: #222; text-anchor: middle; }

/* Overlay clock */
.clock { position: absolute; left: 34px; bottom: 16px; font-family: "Liberation Sans", sans-serif; font-size: 38px; line-height: 48px; font-weight: 700; color: #fff; }
```
